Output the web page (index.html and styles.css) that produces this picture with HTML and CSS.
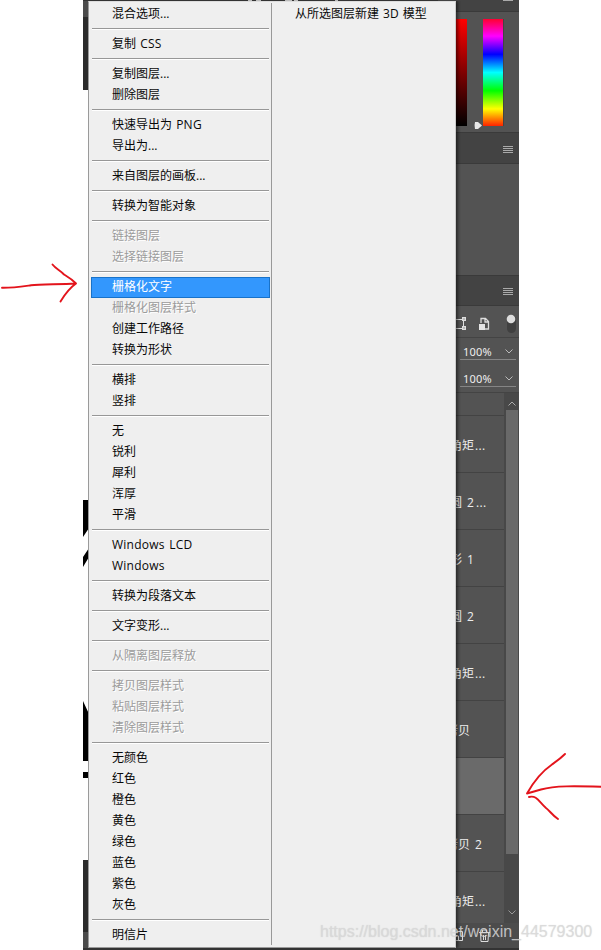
FILE: index.html
```
<!DOCTYPE html>
<html lang="zh-CN">
<head>
<meta charset="utf-8">
<title>图层菜单</title>
<link rel="stylesheet" href="styles.css">
</head>
<body>
<main class="stage">
  <svg class="canvas-edge" width="436" height="950" viewBox="83 0 436 950">
    <path fill="#4b4b4b" d="M83 0h436v17H83zM83 932h436v18H83z"/>
    <path fill="#2b2b2b" d="M83 17h6v73h-6zM83 860h6v72h-6z"/>
    <path fill="#333" d="M83 0h436v1H83zM83 948h436v2H83z"/>
    <path d="M83 500h6v28l-6 9zM83 557l6-9v9l-6 10zM83 701l6 13v47h-6zM83 772h6v6h-6z"/>
    <path stroke="#bbb" d="M248 .5h4M256 .5h5M285 .5h7M294 .5h4M335 .5h3" />
  </svg>
  <aside class="panels">
    <header class="panel-head top"><i class="grip"></i></header>
    <section class="color-panel">
      <div class="shade"></div>
      <svg class="pointer" width="9" height="9" viewBox="0 0 9 9"><path d="M1 1h3l4 3.500L4 8H1Q0 4 1 1z" fill="#e8e8e8"/></svg>
      <div class="hue"></div>
    </section>
    <header class="panel-head mid"><i class="grip"></i></header>
    <section class="blank"></section>
    <header class="panel-head layers"><i class="grip"></i></header>
    <div class="filters">
      <svg width="81" height="32" viewBox="438 306 81 32" fill="none" stroke="#ddd">
        <path d="M455 319.500h8M455 328.500h8M463.500 321v6"/>
        <path fill="#ddd" stroke="none" d="M462 317h4v4h-4zM462 326h4v4h-4z"/>
        <path fill="#505050" stroke="none" d="M463.500 318.500h1v1h-1zM463.500 327.500h1v1h-1z"/>
        <path stroke-width="1.300" d="M481 323v-4.500h4.500l3 3v7.500H485M485 318.500v3.500h3.500"/>
        <path fill="#e5e5e5" stroke="none" d="M479 324h6v6h-6z"/>
        <rect x="507" y="315" width="9" height="18" rx="4.500" fill="#404040" stroke="none"/>
        <circle cx="511" cy="319" r="4.300" fill="#ddd" stroke="none"/>
      </svg>
    </div>
    <div class="value"><span>100%</span><svg width="8" height="5"><path d="M.5.5 4 4 7.500.5" fill="none" stroke="#bbb"/></svg></div>
    <div class="value second"><span>100%</span><svg width="8" height="5"><path d="M.5.5 4 4 7.500.5" fill="none" stroke="#bbb"/></svg></div>
    <div class="layer-area">
      <ul class="layer-list">
        <li class="short"></li>
        <li>圆角矩<span class="dots">...</span></li>
        <li>椭圆 2<span class="dots after-digit">...</span></li>
        <li>矩形 1</li>
        <li>椭圆 2</li>
        <li>圆角矩<span class="dots">...</span></li>
        <li class="copy">拷贝</li>
        <li class="active"></li>
        <li class="copy">拷贝 2</li>
        <li>圆角矩<span class="dots">...</span></li>
      </ul>
      <div class="scrollbar">
        <svg width="8" height="5"><path d="M.5 4.500 4 1 7.500 4.500" fill="none" stroke="#aaa"/></svg>
        <div class="thumb"></div>
        <svg class="down" width="8" height="5"><path d="M.5.5 4 4 7.500.5" fill="none" stroke="#999"/></svg>
      </div>
    </div>
    <footer class="panel-foot">
      <svg width="81" height="25" viewBox="438 923 81 25" fill="none" stroke="#ddd">
        <path d="M455 931.500h7.500v9H455M458.500 940v-4H455"/>
        <path d="M479 932.500h11M482.500 932v-2h4v2M480.500 933l.5 8.500h7l.5-8.500M483.500 935v5M485.500 935v5"/>
      </svg>
    </footer>
  </aside>
  <nav class="menu">
    <div class="column main">
      <div class="item">混合选项...</div><hr>
      <div class="item">复制 <span class="wide">CSS</span></div><hr>
      <div class="item">复制图层...</div>
      <div class="item">删除图层</div><hr>
      <div class="item">快速导出为 <span class="wide">PNG</span></div>
      <div class="item">导出为...</div><hr>
      <div class="item">来自图层的画板...</div><hr>
      <div class="item">转换为智能对象</div><hr>
      <div class="item off">链接图层</div>
      <div class="item off">选择链接图层</div><hr>
      <div class="item hot">栅格化文字</div>
      <div class="item off">栅格化图层样式</div>
      <div class="item">创建工作路径</div>
      <div class="item">转换为形状</div><hr>
      <div class="item">横排</div>
      <div class="item">竖排</div><hr>
      <div class="item">无</div>
      <div class="item">锐利</div>
      <div class="item">犀利</div>
      <div class="item">浑厚</div>
      <div class="item">平滑</div><hr>
      <div class="item wide">Windows LCD</div>
      <div class="item wide">Windows</div><hr>
      <div class="item">转换为段落文本</div><hr>
      <div class="item">文字变形...</div><hr>
      <div class="item off">从隔离图层释放</div><hr>
      <div class="item off">拷贝图层样式</div>
      <div class="item off">粘贴图层样式</div>
      <div class="item off">清除图层样式</div><hr>
      <div class="item">无颜色</div>
      <div class="item">红色</div>
      <div class="item">橙色</div>
      <div class="item">黄色</div>
      <div class="item">绿色</div>
      <div class="item">蓝色</div>
      <div class="item">紫色</div>
      <div class="item">灰色</div><hr>
      <div class="item">明信片</div>
    </div>
    <div class="column extra">
      <div class="item">从所选图层新建 3D 模型</div>
    </div>
  </nav>
  <svg class="marks" width="601" height="950" fill="none" stroke="#e3141c" stroke-width="1.900" stroke-linecap="round" stroke-linejoin="round">
    <path d="M2 287.800C12 288 22 286.500 31 285.300S58 284.500 76 283.500M52.500 264.500C56 269 60 270 64 274.500 68 277 72 279 76 283.500 71 287 65 294 60.500 301.500"/>
    <path d="M601 786.700C575 786 555 785.500 541 789.500L527 793.500C534 781 544 770 552 764.500 557 761 560 759 565 754M529 797C537 795 539 802 546 808 549 810 552 815 558 819"/>
  </svg>
  <div class="watermark">https://blog.csdn.net/weixin_44579300</div>
</main>
</body>
</html>
```
FILE: styles.css
```
* { box-sizing: border-box; }
body {
  margin: 0;
  background: #fff;
  font: 12px/21px "Open Sans", "Noto Sans CJK SC", sans-serif;
}
.stage {
  position: relative;
  width: 601px;
  height: 950px;
  overflow: hidden;
}
.canvas-edge, .marks { position: absolute; top: 0; left: 0; }
.canvas-edge { left: 83px; }
.panels {
  position: relative;
  display: flex;
  flex-direction: column;
  width: 81px;
  height: 948px;
  margin-left: 438px;
  background: #535353;
  color: #eee;
}
.panel-head {
  display: flex;
  flex: none;
  align-items: center;
  justify-content: flex-end;
  padding: 2px 6px 0 0;
  background: #434343;
  border-bottom: 1px solid #3a3a3a;
}
.grip {
  width: 10px;
  height: 7px;
  background: repeating-linear-gradient(#aaa 0 1px, transparent 1px 2px);
}
.panel-head.top { height: 12px; padding-top: 0; align-items: flex-start; }
.top .grip { height: 1px; }
.color-panel {
  display: flex;
  flex: none;
  height: 121px;
  padding-top: 7px;
  border-bottom: 1px solid #3a3a3a;
}
.shade {
  width: 29px;
  height: 107px;
  background: linear-gradient(#f00, #000);
}
.pointer { margin: 102px 0 0 7px; }
.hue {
  width: 21px;
  height: 107px;
  border: 1px solid #444;
  border-width: 0 1px 0 0;
  background: linear-gradient(#ff0030, #f0f 16%, #00f 33%, #0ff 50%, #0f0 67%, #ff0 84%, #f20);
}
.panel-head.mid { height: 31px; }
.blank { flex: none; height: 111px; }
.panel-head.layers { height: 31px; border-top: 1px solid #3a3a3a; }
.filters { flex: none; height: 32px; border-bottom: 1px solid #444; }
.filters svg, .panel-foot svg { display: block; }
.value {
  display: flex;
  flex: none;
  align-items: center;
  justify-content: space-between;
  height: 22px;
  margin: 0 3px 0 22px;
  padding: 5px 3px 0 3px;
  border-bottom: 1px solid #858585;
  font: 11px "Noto Sans", sans-serif;
  letter-spacing: .2px;
}
.value.second { margin-top: 5px; margin-bottom: 5px; }
.layer-area {
  display: flex;
  flex: none;
  height: 531px;
  border-top: 1px solid #444;
}
.layer-list {
  flex: 1;
  height: 530px;
  margin: 0;
  padding: 0;
  overflow: hidden;
  list-style: none;
}
.layer-list li {
  height: 57px;
  border-bottom: 1px solid #434343;
  line-height: 60px;
  white-space: nowrap;
  word-spacing: 2px;
}
.dots { margin-left: 1px; letter-spacing: .3px; }
.dots.after-digit { margin-left: 2px; }
.layer-list .short { height: 23px; }
.layer-list .copy { padding-left: 8px; }
.layer-list .active { background: #6a6a6a; }
.scrollbar {
  display: flex;
  flex-direction: column;
  align-items: center;
  width: 15px;
  padding: 8px 1px 8px;
  background: #484848;
}
.thumb { width: 12px; height: 444px; margin-top: 4px; background: #696969; }
.down { margin-top: auto; }
.panel-foot { height: 25px; background: #4c4c4c; }
.menu {
  position: absolute;
  top: 1px;
  left: 88px;
  display: flex;
  width: 368px;
  height: 947px;
  padding: 2px 0;
  background: #efefef;
  border: 1px solid #9a9a9a;
  border-top-color: #ddd;
  border-right-color: #ccc;
  box-shadow: 2px 0 3px rgba(0, 0, 0, .5);
  clip-path: inset(0 -5px 0 0);
  color: #080808;
  word-spacing: 1px;
}
.main { width: 183px; padding: 0 2px 0 3px; border-right: 1px solid #999; }
.menu .main { margin-top: -1px; }
.extra { margin-top: -1px; padding-left: 3px; }
.item {
  height: 21px;
  padding-left: 20px;
  line-height: 21px;
  white-space: nowrap;
}
.wide { letter-spacing: .25px; }
.off { color: #9b9b9b; text-shadow: 1px 1px 0 #fff; }
.hot {
  position: relative;
  top: 1px;
  width: 179px;
  margin-left: -1px;
  padding-left: 20px;
  background: #3397fd;
  border: 1px solid #1872c9;
  color: #fff;
  line-height: 17px;
}
.menu hr {
  height: 1px;
  margin: 4px 0;
  border: 0;
  background: #979797;
  box-shadow: 0 1px #fff;
}
.watermark {
  position: absolute;
  top: 921px;
  left: 320px;
  color: rgba(218, 218, 218, .8);
  font: 16px/21px "Liberation Sans", sans-serif;
  text-shadow: 0 0 1px rgba(140, 140, 140, .3);
  white-space: nowrap;
}
```
